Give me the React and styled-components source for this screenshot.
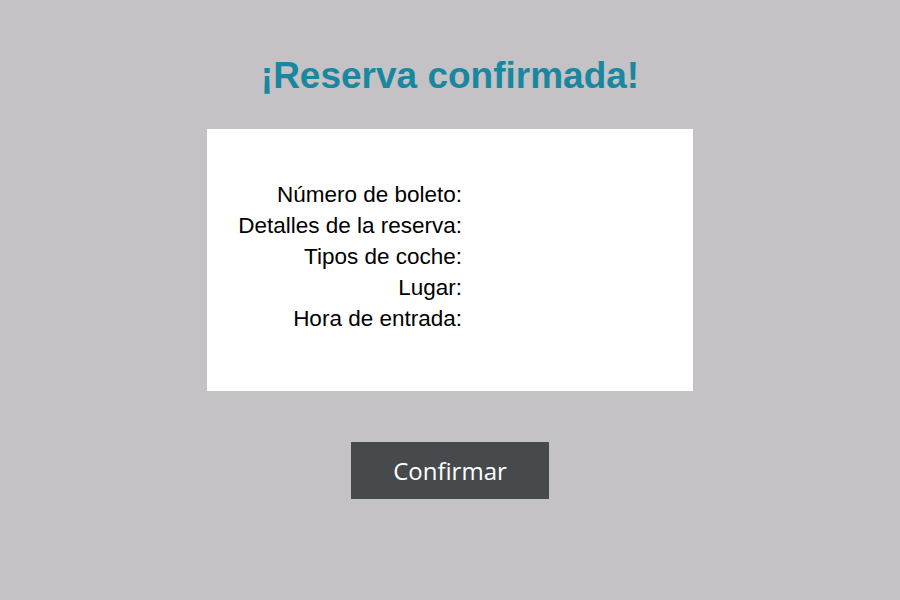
import React from "react";
import styled, { createGlobalStyle } from "styled-components";

const GlobalStyle = createGlobalStyle`
  html, body {
    margin: 0;
    padding: 0;
    background: #c4c2c5;
  }
`;

const fields = [
  { label: "Número de boleto:", value: "" },
  { label: "Detalles de la reserva:", value: "" },
  { label: "Tipos de coche:", value: "" },
  { label: "Lugar:", value: "" },
  { label: "Hora de entrada:", value: "" },
];

const App = () => {
  return (
    <Page>
      <GlobalStyle />
      <Title>¡Reserva confirmada!</Title>
      <Card>
        {fields.map((f) => (
          <React.Fragment key={f.label}>
            <Label>{f.label}</Label>
            <Value>{f.value}</Value>
          </React.Fragment>
        ))}
      </Card>
      <ConfirmButton>Confirmar</ConfirmButton>
    </Page>
  );
};

export default App;

const Page = styled.div`
  width: 900px;
  height: 600px;
  display: flex;
  flex-direction: column;
  align-items: center;
  padding-top: 55px;
  box-sizing: border-box;
`;

const Title = styled.h1`
  margin: 0;
  font-family: "Liberation Sans", Arial, sans-serif;
  font-weight: 700;
  font-size: 37px;
  line-height: 41px;
  color: #1a87a0;
`;

const Card = styled.div`
  margin-top: 33px;
  width: 486px;
  height: 262px;
  box-sizing: border-box;
  padding-top: 50px;
  background: #ffffff;
  display: grid;
  grid-template-columns: 255px 1fr;
  align-content: start;
  column-gap: 8px;
`;

const Label = styled.div`
  text-align: right;
  font-family: "Liberation Sans", Arial, sans-serif;
  font-size: 22.5px;
  line-height: 31px;
  color: #000000;
  white-space: nowrap;
`;

const Value = styled.div`
  font-family: "Liberation Sans", Arial, sans-serif;
  font-size: 22.5px;
  line-height: 31px;
  color: #000000;
`;

const ConfirmButton = styled.button`
  margin-top: 51px;
  width: 198px;
  height: 57px;
  border: none;
  background: #474a4d;
  color: #ffffff;
  font-family: "Open Sans", sans-serif;
  font-size: 24px;
  cursor: pointer;
`;
